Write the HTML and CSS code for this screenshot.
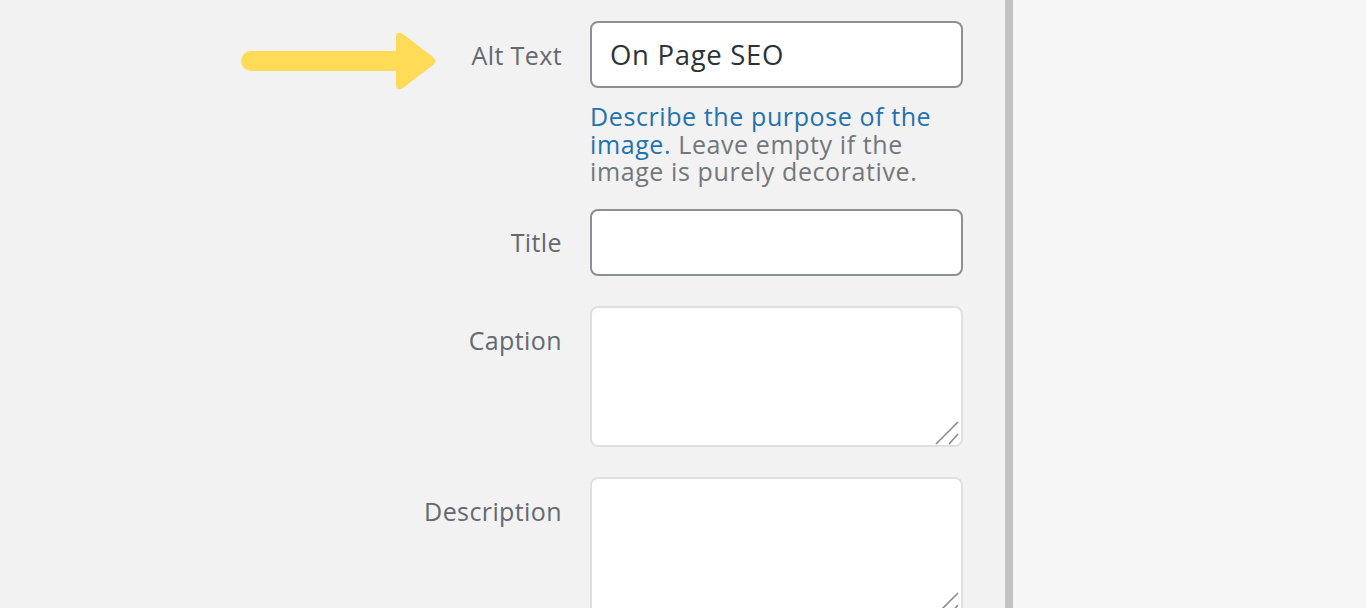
FILE: index.html
```html
<!DOCTYPE html>
<html lang="en">
<head>
<meta charset="utf-8">
<title>Attachment details</title>
<link rel="stylesheet" href="styles.css">
</head>
<body>
<div class="screen">
  <main class="details">
    <div class="form">
      <label class="label label-alt" for="alt">
        <svg class="arrow" width="200" height="64" viewBox="0 0 200 64" aria-hidden="true">
          <line x1="10" y1="32" x2="162" y2="32" stroke="#ffdb57" stroke-width="20" stroke-linecap="round"/>
          <path d="M155 9 Q155 1 162 5 L192 28 Q197 32 192 36 L162 59 Q155 63 155 55 Z" fill="#ffdb57"/>
        </svg>
        <span>Alt Text</span>
      </label>
      <div class="field">
        <input id="alt" class="input" type="text" value="On Page SEO">
        <p class="help"><a href="#">Describe the purpose of the image.</a> Leave empty if the image is purely decorative.</p>
      </div>

      <label class="label" for="title"><span>Title</span></label>
      <div class="field">
        <input id="title" class="input" type="text" value="">
      </div>

      <label class="label label-top" for="caption"><span>Caption</span></label>
      <div class="field area-wrap">
        <textarea id="caption" class="area"></textarea>
        <svg class="grip" width="24" height="24" viewBox="0 0 24 24" aria-hidden="true">
          <line x1="1" y1="23" x2="23" y2="1" stroke="#8c8c8c" stroke-width="1.6"/>
          <line x1="14" y1="23" x2="23" y2="13" stroke="#8c8c8c" stroke-width="1.6"/>
        </svg>
      </div>

      <label class="label label-top" for="description"><span>Description</span></label>
      <div class="field area-wrap">
        <textarea id="description" class="area"></textarea>
        <svg class="grip" width="24" height="24" viewBox="0 0 24 24" aria-hidden="true">
          <line x1="1" y1="23" x2="23" y2="1" stroke="#8c8c8c" stroke-width="1.6"/>
          <line x1="14" y1="23" x2="23" y2="13" stroke="#8c8c8c" stroke-width="1.6"/>
        </svg>
      </div>
    </div>
  </main>
  <div class="divider"></div>
  <aside class="side"></aside>
</div>
</body>
</html>
```

FILE: styles.css
```css
html, body {
  margin: 0;
  padding: 0;
  height: 100%;
  overflow: hidden;
}

body {
  font-family: "Open Sans", "Noto Sans", "Liberation Sans", sans-serif;
  background: #f2f2f2;
  color: #646970;
}

.screen {
  display: flex;
  height: 608px;
}

.details {
  width: 1005px;
  background: #f2f2f2;
  flex: none;
}

.divider {
  width: 8px;
  background: #c3c3c4;
  flex: none;
}

.side {
  flex: 1;
  background: #f6f6f6;
}

.form {
  display: grid;
  grid-template-columns: 562px 373px;
  column-gap: 28px;
  row-gap: 30px;
  padding-top: 21px;
  align-items: start;
}

.label {
  display: flex;
  align-items: center;
  justify-content: flex-end;
  font-size: 25px;
  line-height: 32px;
  height: 67px;
  color: #646970;
  letter-spacing: 0.4px;
}

.label-top {
  align-items: flex-start;
  height: auto;
  padding-top: 18px;
}

.arrow {
  margin-right: 30px;
  margin-top: 12px;
}

.field {
  display: flex;
  flex-direction: column;
}

.input {
  box-sizing: border-box;
  width: 373px;
  height: 67px;
  margin: 0;
  padding: 0 18px;
  border: 2px solid #8c8f94;
  border-radius: 8px;
  background: #fff;
  font-family: inherit;
  font-size: 27.5px;
  color: #2c3338;
  letter-spacing: 0.7px;
  outline: none;
}

.help {
  margin: 15px 0 -7px;
  font-size: 25px;
  line-height: 27.5px;
  color: #72777c;
  letter-spacing: 0.6px;
}

.help a {
  color: #2271b1;
  text-decoration: none;
}

.area-wrap {
  position: relative;
}

.area {
  box-sizing: border-box;
  width: 373px;
  height: 141px;
  margin: 0;
  border: 2px solid #dfe0e2;
  border-radius: 8px;
  background: #fff;
  resize: none;
  outline: none;
  display: block;
}

.grip {
  position: absolute;
  right: 4px;
  bottom: 2px;
}
```
